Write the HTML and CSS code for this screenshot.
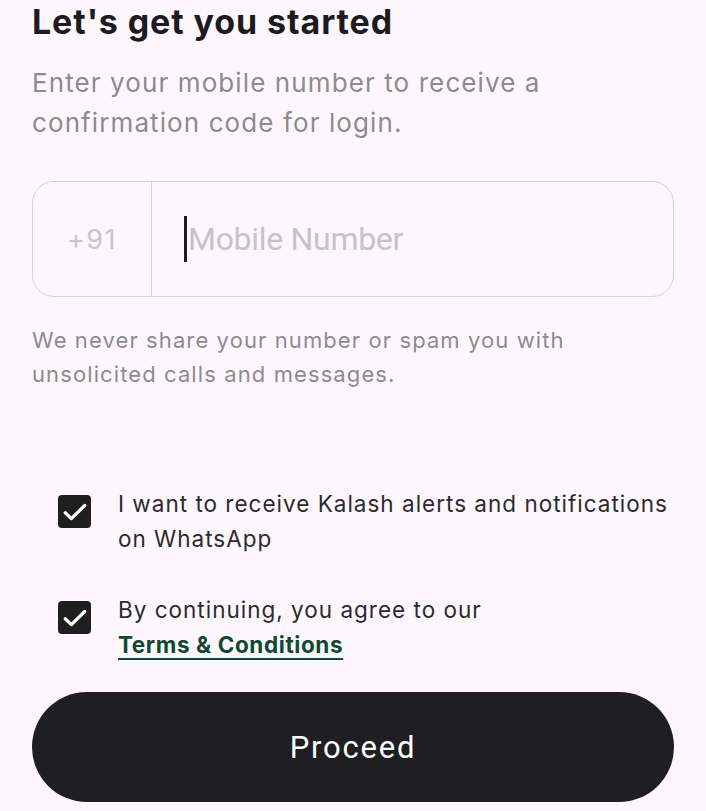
FILE: index.html
```html
<!DOCTYPE html>
<html>
<head>
<meta charset="utf-8">
<link rel="stylesheet" href="styles.css">
</head>
<body>
<main class="page">
  <h1 class="title">Let's get you started</h1>
  <p class="subtitle">Enter your mobile number to receive a confirmation code for login.</p>
  <div class="phone-field">
    <div class="code">+91</div>
    <div class="number"><span class="caret"></span><span class="placeholder">Mobile Number</span></div>
  </div>
  <p class="helper">We never share your number or spam you with unsolicited calls and messages.</p>
  <div class="consents">
    <label class="consent">
      <span class="box"><svg viewBox="0 0 24 24" width="30" height="30"><path d="M4.2 12.6l4.9 4.7L19.8 6.8" fill="none" stroke="#fff" stroke-width="2.6" stroke-linecap="round" stroke-linejoin="round"/></svg></span>
      <span class="consent-text">I want to receive Kalash alerts and notifications on WhatsApp</span>
    </label>
    <label class="consent">
      <span class="box"><svg viewBox="0 0 24 24" width="30" height="30"><path d="M4.2 12.6l4.9 4.7L19.8 6.8" fill="none" stroke="#fff" stroke-width="2.6" stroke-linecap="round" stroke-linejoin="round"/></svg></span>
      <span class="consent-text">By continuing, you agree to our<br><a class="terms" href="#">Terms &amp; Conditions</a></span>
    </label>
  </div>
  <button class="proceed">Proceed</button>
</main>
</body>
</html>
```
FILE: styles.css
```css
html, body {
  margin: 0;
  padding: 0;
  background: #fdf7fd;
}
.page {
  padding: 0 32px;
  font-family: Inter, "Noto Sans", sans-serif;
}
.title {
  margin: 0;
  font-size: 34px;
  line-height: 44px;
  font-weight: 700;
  color: #1c1b1f;
  letter-spacing: 0.9px;
}
.subtitle {
  margin: 19px 0 0;
  font-size: 26px;
  line-height: 40px;
  color: #8e8a8e;
  letter-spacing: 1.1px;
  max-width: 580px;
}
.phone-field {
  margin-top: 38px;
  height: 116px;
  box-sizing: border-box;
  border: 1.5px solid #d6d2d6;
  border-radius: 22px;
  display: flex;
}
.code {
  width: 119px;
  box-sizing: border-box;
  border-right: 1.5px solid #d6d2d6;
  display: flex;
  align-items: center;
  justify-content: center;
  font-size: 27px;
  letter-spacing: 1.5px;
  color: #c8c4c8;
}
.number {
  flex: 1;
  display: flex;
  align-items: center;
  padding-left: 32px;
}
.caret {
  width: 3px;
  height: 46px;
  background: #1c1b1f;
}
.placeholder {
  font-family: Roboto, sans-serif;
  font-size: 32px;
  color: #c6c2c8;
  letter-spacing: -0.3px;
  margin-left: 1px;
}
.helper {
  margin: 26px 0 0;
  font-size: 22px;
  line-height: 34px;
  color: #8e8a8e;
  letter-spacing: 1.1px;
  max-width: 580px;
}
.consents {
  margin-top: 95px;
  padding-left: 26px;
  display: flex;
  flex-direction: column;
  gap: 36px;
}
.consent {
  display: flex;
  align-items: flex-start;
  gap: 27px;
}
.box {
  flex: none;
  width: 33px;
  height: 33px;
  margin-top: 9px;
  border-radius: 4px;
  background: #1f1f1f;
  display: flex;
  align-items: center;
  justify-content: center;
}
.consent-text {
  font-size: 22.5px;
  line-height: 35px;
  letter-spacing: 1px;
  color: #2b2a2d;
}
.terms {
  color: #0d4a2f;
  font-weight: 700;
  letter-spacing: 0.6px;
  text-decoration: underline;
  text-underline-offset: 5px;
  text-decoration-thickness: 2px;
}
.proceed {
  display: block;
  width: 100%;
  margin-top: 30px;
  height: 110px;
  border: none;
  border-radius: 55px;
  background: #1f1e20;
  color: #ffffff;
  font-family: Roboto, sans-serif;
  font-size: 31px;
  letter-spacing: 1.8px;
}
```
